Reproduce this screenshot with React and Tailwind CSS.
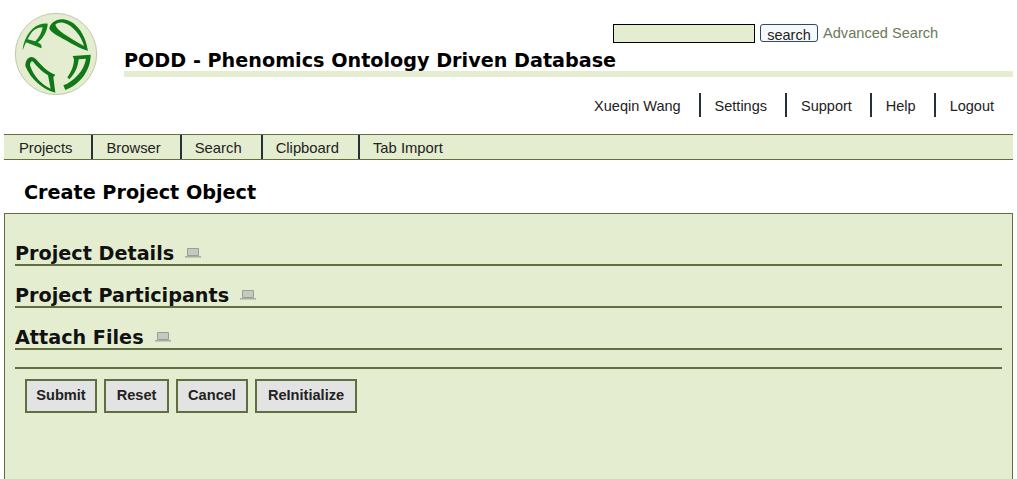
const tabs = ["Projects", "Browser", "Search", "Clipboard", "Tab Import"];
const userLinks = ["Xueqin Wang", "Settings", "Support", "Help", "Logout"];
const sections = ["Project Details", "Project Participants", "Attach Files"];
const actions = [
  { label: "Submit", width: "w-[72px]" },
  { label: "Reset", width: "w-[65px]" },
  { label: "Cancel", width: "w-[72px]" },
  { label: "ReInitialize", width: "w-[102px]" },
];

const Logo = () => (
  <svg width="84" height="84" viewBox="12 12 252 252" className="shrink-0">
    <circle cx="138" cy="138" r="122" fill="#e4edcf" stroke="#bccbaa" strokeWidth="3" />
    {/* P */}
    <path d="M38 127 C40 100 52 78 68 62 C82 50 96 46 113 47 C113 66 101 90 83 104 C92 106 97 112 94 121 L46 102 L50 93 L76 100 C88 88 96 72 98 58 C88 58 76 62 66 72 C56 86 46 104 38 127Z" fill="#13801a" />
    {/* upper right loop */}
    <path d="M118 62 C120 46 138 32 160 34 C196 38 226 76 234 128 C214 124 190 110 166 96 C146 84 126 76 118 62Z M136 50 C140 66 170 84 222 114 C214 84 190 52 160 44 C150 42 142 44 136 50Z" fill="#107a16" fillRule="evenodd" />
    {/* lower right curve */}
    <path d="M188 144 L242 140 C242 186 212 228 166 246 L160 232 C190 220 222 190 228 152 L206 154 C204 176 196 196 178 214 L172 208 C184 192 192 172 192 154Z" fill="#107a16" />
    {/* lower left sweep */}
    <path d="M46 174 C46 152 62 138 78 154 C94 172 112 192 136 200 L130 208 L136 254 C100 246 62 214 46 174Z M60 172 C70 204 96 232 122 242 L114 202 C96 192 78 172 68 160 C62 160 60 166 60 172Z" fill="#0f7815" fillRule="evenodd" />
  </svg>
);

const Collapse = () => (
  <svg width="16" height="10" viewBox="0 0 16 10" className="ml-[11px] mb-[6px] shrink-0">
    <path d="M2.5 .5H13.5V7.5H2.5Z" fill="#c6c9c2" stroke="#9a9e90" />
    <path d="M0 8.75H16" stroke="#a9ad9f" strokeWidth="1.5" />
  </svg>
);

export default function App() {
  return (
    <div className="w-[1017px] h-[479px] overflow-hidden bg-white font-['Liberation_Sans',sans-serif] text-[#222]">
      <header className="flex h-[134px]">
        <div className="pl-[14px] pt-[12px]">
          <Logo />
        </div>
        <div className="ml-[26px] flex-1 flex flex-col">
          <div className="flex items-center pl-[489px] pt-[23px] h-[43px]">
            <input className="w-[142px] h-[19px] bg-[#e4edcf] border border-black" />
            <button className="ml-[5px] h-[18px] w-[58px] bg-[#f7f8fa] border border-[#2c4a6e] rounded-[3px] text-[14.5px] leading-[18px] text-[#222] pt-[1px]">search</button>
            <a className="ml-[5px] mt-[2px] text-[14.6px] text-[#6b7a5a]">Advanced Search</a>
          </div>
          <h1 className="font-['DejaVu_Sans',sans-serif] font-bold text-[19.2px] leading-[20px] text-black mt-[8px]">PODD - Phenomics Ontology Driven Database</h1>
          <div className="h-[6px] mr-[4px] bg-[#e4edcf]" />
          <nav className="flex justify-end mt-[16px] mr-[4px]">
            {userLinks.map((l, i) => (
              <a key={l} className={`h-[24px] pl-[14px] text-[14.5px] leading-[26px] ${i > 0 ? "border-l-2 border-[#25303a]" : ""} ${i < 4 ? "pr-[18px]" : "pr-[19px]"}`}>{l}</a>
            ))}
          </nav>
        </div>
      </header>

      <nav className="mx-[4px] h-[26px] flex bg-[#e4edcf] border-y border-[#5f6f3f]">
        {tabs.map((t, i) => (
          <a key={t} className={`h-full pr-[19px] text-[14.8px] leading-[26px] ${i > 0 ? "pl-[13px] border-l-2 border-[#25303a]" : "pl-[15px]"}`}>{t}</a>
        ))}
      </nav>

      <h2 className="font-['DejaVu_Sans',sans-serif] font-bold text-[19.2px] leading-[24px] text-black pl-[24px] pt-[21px] pb-[8px]">Create Project Object</h2>

      <main className="mx-[4px] h-[270px] bg-[#e4edcf] border border-[#5f6f3f] px-[10px] pt-[24px]">
        {sections.map((s) => (
          <div key={s} className="flex items-end h-[28px] mb-[14px] border-b-2 border-[#5f6f3f]">
            <span className="font-['DejaVu_Sans',sans-serif] font-bold text-[19.2px] leading-[20px] text-[#111]">{s}</span>
            <Collapse />
          </div>
        ))}
        <div className="h-[2px] mt-[17px] bg-[#5f6f3f]" />
        <div className="flex gap-[7px] pl-[10px] mt-[10px]">
          {actions.map((a) => (
            <button key={a.label} className={`h-[34px] ${a.width} bg-[#e3e3e3] border-2 border-[#5f6f3f] text-[14.6px] font-bold text-[#222]`}>{a.label}</button>
          ))}
        </div>
      </main>
    </div>
  );
}
